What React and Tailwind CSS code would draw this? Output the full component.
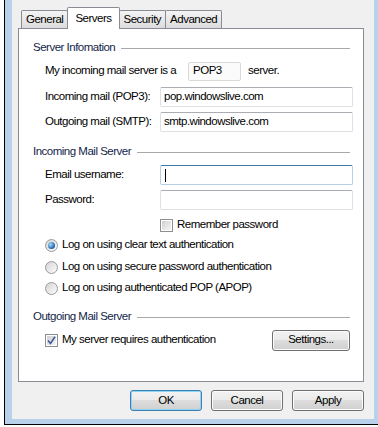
import React from "react";

// Win7 style "Servers" tab of a mail account properties dialog
function Header({ children }) {
  return (
    <div className="flex items-center pr-[13px]">
      <span className="text-[#14264a] whitespace-nowrap">{children}</span>
      <div className="flex-1 ml-[6px] h-px bg-[#a9a9a9]" />
    </div>
  );
}

function TextBox({ value, focused, className = "" }) {
  return (
    <div
      className={
        "h-[20px] flex items-center px-[3px] bg-white border rounded-[2px] " +
        (focused
          ? "border-[#b5cfe7] border-t-[#3d7bad] "
          : "border-[#dde1e6] border-t-[#abadb3] ") +
        className
      }
    >
      {focused && <span className="w-px h-[13px] bg-black ml-[1px]" />}
      <span className="whitespace-nowrap">{value}</span>
    </div>
  );
}

function Radio({ checked, label }) {
  return (
    <div className="flex items-center">
      <span className="w-[13px] h-[13px] rounded-full border border-[#9a9a9a] bg-gradient-to-br from-[#d4d4d4] to-[#fcfcfc] flex items-center justify-center">
        {checked && (
          <span className="w-[7px] h-[7px] rounded-full bg-[radial-gradient(circle_at_35%_35%,#a8dcff,#1d62a8_70%)]" />
        )}
      </span>
      <span className="ml-[4px] whitespace-nowrap">{label}</span>
    </div>
  );
}

function Check({ checked, label }) {
  return (
    <div className="flex items-center">
      <span className="w-[13px] h-[13px] border border-[#8e8f8f] bg-white p-[1px] flex">
        <span className="flex-1 bg-gradient-to-br from-[#d0d0d0] to-[#f6f6f6] flex items-center justify-center">
          {checked && (
            <svg width="9" height="9" viewBox="0 0 9 9">
              <path d="M1 4.5 L3.5 7.5 L8 0.8" fill="none" stroke="#3f5a9c" strokeWidth="1.6" />
            </svg>
          )}
        </span>
      </span>
      <span className="ml-[4px] whitespace-nowrap">{label}</span>
    </div>
  );
}

function Button({ children, focused, className = "" }) {
  return (
    <div
      className={
        "h-[21px] w-[72px] rounded-[3px] border flex items-center justify-center bg-[linear-gradient(#f2f2f2_0%,#ebebeb_45%,#dddddd_50%,#cfcfcf_100%)] " +
        (focused ? "border-[#3c7fb1] shadow-[inset_0_0_0_1px_#8fd4f7]" : "border-[#707070] shadow-[inset_0_0_0_1px_#fcfcfc]") +
        " " +
        className
      }
    >
      {children}
    </div>
  );
}

function Tab({ children, selected, className = "" }) {
  if (selected) {
    return (
      <div
        className={
          "relative z-10 h-[22px] -mb-px px-[7px] bg-white border border-b-0 border-[#898c95] rounded-t-[2px] flex items-center " +
          className
        }
      >
        {children}
      </div>
    );
  }
  return (
    <div
      className={
        "h-[18px] px-[4px] bg-gradient-to-b from-[#f4f4f4] to-[#dcdcdc] border border-b-0 border-[#898c95] rounded-t-[2px] flex items-center " +
        className
      }
    >
      {children}
    </div>
  );
}

export default function App() {
  return (
    <div className="w-[378px] h-[427px] bg-white flex flex-col font-['Liberation_Sans',Arial,sans-serif] text-[11.5px] tracking-[-0.5px] leading-none text-black">
      <div className="flex-1 flex pl-[4px] min-h-0">
        <div className="flex-1 flex border-l border-b border-black bg-[#b9d1ea] pl-[7px] pr-[4px] pb-[5px]">
          <div className="flex-1 flex flex-col bg-[#f0f0f0] pt-[7px] pl-[6px] pr-[10px]">
            {/* Tabs */}
            <div className="flex items-end pl-[3px]">
              <Tab>General</Tab>
              <Tab selected className="-ml-px">Servers</Tab>
              <Tab className="-ml-px">Security</Tab>
              <Tab className="-ml-px">Advanced</Tab>
            </div>

            {/* Panel */}
            <div className="h-[354px] bg-white border border-[#898c95] pl-[14px] pt-[9px]">
              <div className="h-[20px] flex items-center">
                <div className="flex-1">
                  <Header>Server Infomation</Header>
                </div>
              </div>

              <div className="pl-[12px] pr-[10px]">
                <div className="h-[26px] flex items-center">
                  <span className="whitespace-nowrap">My incoming mail server is a</span>
                  <div className="ml-[12px] w-[53px] h-[19px] border border-[#d9d9d9] rounded-[2px] bg-[#fbfbfb] flex items-center px-[4px]">
                    POP3
                  </div>
                  <span className="ml-[7px]">server.</span>
                </div>
                <div className="h-[26px] flex items-center">
                  <span className="w-[115px] whitespace-nowrap">Incoming mail (POP3):</span>
                  <TextBox value="pop.windowslive.com" className="flex-1" />
                </div>
                <div className="h-[24px] flex items-center">
                  <span className="w-[115px] whitespace-nowrap">Outgoing mail (SMTP):</span>
                  <TextBox value="smtp.windowslive.com" className="flex-1" />
                </div>
              </div>

              <div className="mt-[5px] h-[26px] flex items-center">
                <div className="flex-1">
                  <Header>Incoming Mail Server</Header>
                </div>
              </div>

              <div className="pl-[12px] pr-[10px]">
                <div className="h-[20px] flex items-center">
                  <span className="w-[115px]">Email username:</span>
                  <TextBox focused className="flex-1" />
                </div>
                <div className="h-[30px] flex items-center">
                  <span className="w-[115px]">Password:</span>
                  <TextBox className="flex-1" />
                </div>
                <div className="h-[20px] flex items-center pl-[115px]">
                  <Check label="Remember password" />
                </div>
                <div className="h-[20px] flex items-center">
                  <Radio checked label="Log on using clear text authentication" />
                </div>
                <div className="h-[24px] flex items-center">
                  <Radio label="Log on using secure password authentication" />
                </div>
                <div className="h-[18px] flex items-center">
                  <Radio label="Log on using authenticated POP (APOP)" />
                </div>
              </div>

              <div className="mt-[8px] h-[24px] flex items-center">
                <div className="flex-1">
                  <Header>Outgoing Mail Server</Header>
                </div>
              </div>

              <div className="pl-[12px] pr-[13px] h-[22px] flex items-center justify-between">
                <Check checked label="My server requires authentication" />
                <Button className="w-[78px] h-[20px]">Settings...</Button>
              </div>
            </div>

            {/* Dialog buttons */}
            <div className="mt-[8px] flex justify-end gap-[9px]">
              <Button focused>OK</Button>
              <Button>Cancel</Button>
              <Button>Apply</Button>
            </div>
          </div>
        </div>
      </div>
      <div className="h-[2px]" />
    </div>
  );
}
